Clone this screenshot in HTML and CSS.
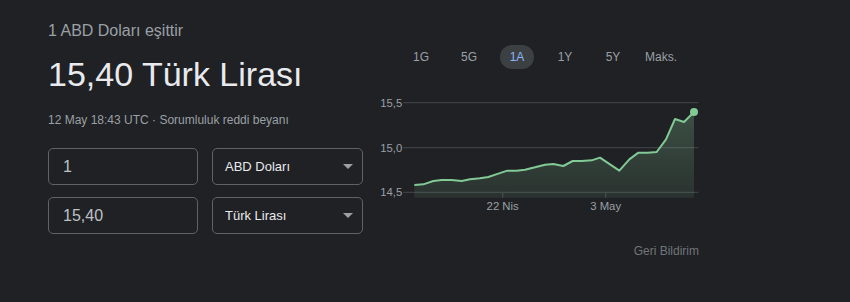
FILE: index.html
```
<!DOCTYPE html>
<html lang="tr">
<head>
  <meta charset="UTF-8">
  <title>Döviz Çevirici</title>
  <link rel="stylesheet" href="styles.css">
</head>
<body>

  <div class="kart">
    <div class="sol">
      <div class="esit">1 ABD Doları eşittir</div>
      <div class="sonuc">15,40 Türk Lirası</div>
      <div class="tarih">12 May 18:43 UTC · <span class="link">Sorumluluk reddi beyanı</span></div>

      <div class="satir">
        <div class="kutu">1</div>
        <div class="secim">ABD Doları <span class="ok"></span></div>
      </div>
      <div class="satir">
        <div class="kutu">15,40</div>
        <div class="secim">Türk Lirası <span class="ok"></span></div>
      </div>
    </div>

    <div class="sag">
      <div class="sekmeler">
        <div class="sekme">1G</div>
        <div class="sekme">5G</div>
        <div class="sekme aktif"><span>1A</span></div>
        <div class="sekme">1Y</div>
        <div class="sekme">5Y</div>
        <div class="sekme">Maks.</div>
      </div>

      <svg class="grafik" width="340" height="130" viewBox="0 0 1020 390">
        <defs>
          <linearGradient id="dolgu" x1="0" y1="0" x2="0" y2="1">
            <stop offset="0" stop-color="#81c995" stop-opacity="0.28"/>
            <stop offset="1" stop-color="#81c995" stop-opacity="0.1"/>
          </linearGradient>
        </defs>

        <!-- yatay çizgiler -->
        <line x1="100" y1="38" x2="985" y2="38" class="izgara"/>
        <line x1="100" y1="173" x2="985" y2="173" class="izgara"/>
        <line x1="100" y1="307" x2="985" y2="307" class="izgara"/>
        <line x1="398" y1="307" x2="398" y2="323" class="izgara"/>
        <line x1="707" y1="307" x2="707" y2="323" class="izgara"/>

        <text x="97" y="50" class="etiket" text-anchor="end">15,5</text>
        <text x="97" y="185" class="etiket" text-anchor="end">15,0</text>
        <text x="97" y="319" class="etiket" text-anchor="end">14,5</text>
        <text x="398" y="360" class="etiket" text-anchor="middle">22 Nis</text>
        <text x="707" y="360" class="etiket" text-anchor="middle">3 May</text>

        <polygon fill="url(#dolgu)" points="133,285 160,283 190,273 215,270 245,270 275,273 300,268 330,265 355,261 385,251 412,242 440,242 465,239 495,232 525,224 550,222 580,228 608,213 635,213 665,211 690,203 720,223 748,242 778,208 805,188 832,188 860,186 888,148 915,87 942,96 972,66 972,323 133,323"/>
        <polyline class="cizgi" points="133,285 160,283 190,273 215,270 245,270 275,273 300,268 330,265 355,261 385,251 412,242 440,242 465,239 495,232 525,224 550,222 580,228 608,213 635,213 665,211 690,203 720,223 748,242 778,208 805,188 832,188 860,186 888,148 915,87 942,96 972,66"/>
        <circle cx="972" cy="66" r="12" fill="#81c995"/>
      </svg>

      <div class="geri">Geri Bildirim</div>
    </div>
  </div>

</body>
</html>
```

FILE: styles.css
```
body {
  margin: 0;
  background-color: #202124;
  font-family: "Liberation Sans", Arial, sans-serif;
}

.kart {
  display: flex;
  padding-left: 48px;
  height: 302px;
}

.sol {
  width: 315px;
  padding-top: 21px;
}

.esit {
  font-size: 16px;
  line-height: 20px;
  color: #9aa0a6;
}

.sonuc {
  font-size: 34px;
  line-height: 44px;
  color: #e8eaed;
  margin-top: 11px;
}

.tarih {
  font-size: 12px;
  line-height: 16px;
  color: #9aa0a6;
  margin-top: 16px;
}

.satir {
  display: flex;
  gap: 14px;
  margin-top: 12px;
}

.tarih + .satir {
  margin-top: 20px;
}

.kutu, .secim {
  box-sizing: border-box;
  height: 37px;
  border: 1px solid #5f6368;
  border-radius: 5px;
  display: flex;
  align-items: center;
}

.kutu {
  width: 150px;
  padding-left: 14px;
  font-size: 16px;
  color: #bdc1c6;
}

.secim {
  width: 151px;
  padding: 0 9px 0 12px;
  font-size: 13px;
  color: #e8eaed;
  justify-content: space-between;
}

.ok {
  width: 0;
  height: 0;
  border-left: 5px solid transparent;
  border-right: 5px solid transparent;
  border-top: 5px solid #9aa0a6;
}

.sag {
  width: 340px;
  margin-left: 7px;
}

.sekmeler {
  display: flex;
  margin: 45px 0 0 27px;
  height: 24px;
}

.sekme {
  width: 48px;
  font-size: 12px;
  color: #9aa0a6;
  display: flex;
  align-items: center;
  justify-content: center;
}

.sekme.aktif span {
  background-color: #3c4043;
  color: #8ab4f8;
  width: 34px;
  height: 24px;
  border-radius: 12px;
  display: flex;
  align-items: center;
  justify-content: center;
}

.grafik {
  display: block;
  margin-top: 21px;
}

.izgara {
  stroke: #3c4043;
  stroke-width: 4;
}

.etiket {
  font-size: 34px;
  fill: #9aa0a6;
}

.cizgi {
  fill: none;
  stroke: #81c995;
  stroke-width: 6;
  stroke-linejoin: round;
}

.geri {
  text-align: right;
  padding-right: 11px;
  margin-top: 24px;
  font-size: 12px;
  color: #70757a;
}
```
